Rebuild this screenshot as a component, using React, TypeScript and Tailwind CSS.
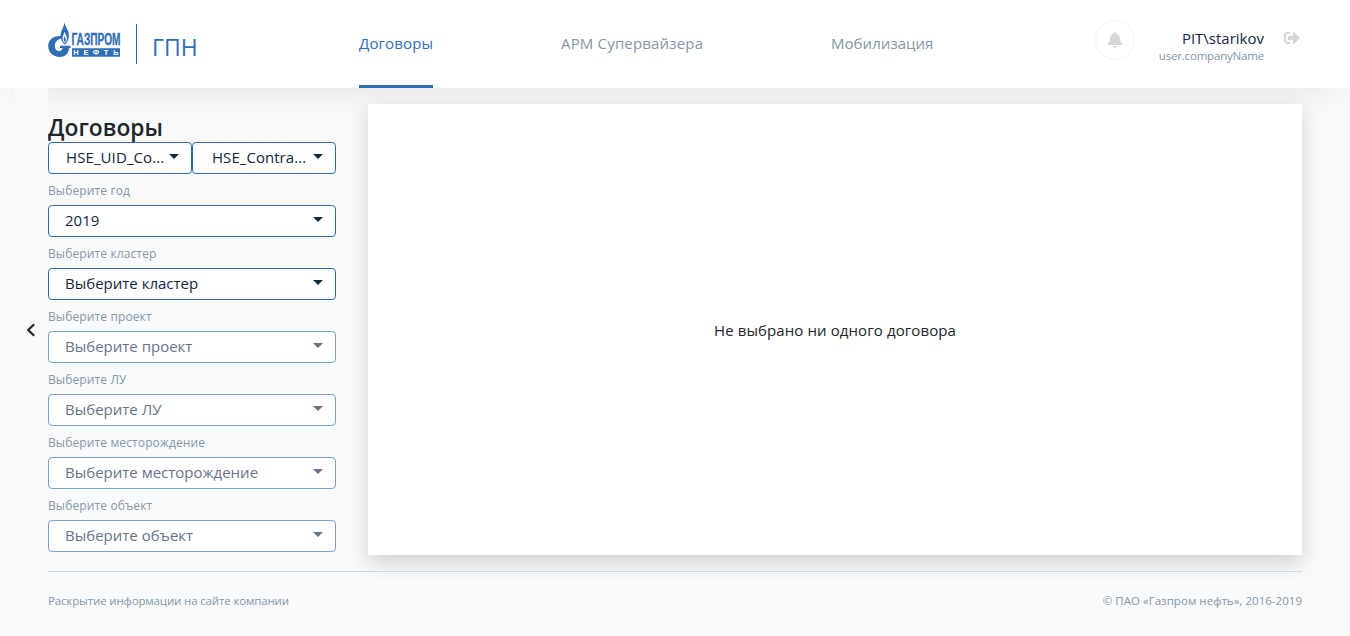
import { FaBell, FaSignOutAlt } from 'react-icons/fa';

function Logo() {
  return (
    <svg className="h-10 w-[74px] shrink-0 overflow-visible" viewBox="0 0 74 40" fill="#2e6eb5">
      <path d="M13.5 14.2C6 13.2.2 17.6.2 24c0 6.300 4.800 10.900 11.300 10.900 5.400 0 9.100-3.300 9.700-9h1.300v-2.200H12v2.200h2.600c-.4 2-1.500 3.200-3.300 3.200-2.800 0-4.500-2-4.500-5 0-3.500 2.400-6.600 6.700-7.500z" />
      <path fillRule="evenodd" d="M16.400.3c.5 4.200 4.500 7.800 4.500 13 0 4.200-1.600 7.500-4 9.300-2.600-1.800-4.300-4.700-4.300-8.800 0-5.300 3.600-8.500 3.800-13.500zm.2 9.500c-.7 2.800-2 4-2 6.600 0 2.100.8 3.700 2.100 4.700 1.400-1.100 2.200-2.700 2.200-4.800 0-2.400-1.600-3.900-2.300-6.500z" />
      <path d="M16.700 13.500c-.2 1.800-1 2.700-1 4.300 0 1.100.4 1.900 1 2.500.7-.6 1.100-1.500 1.100-2.500 0-1.500-.9-2.500-1.100-4.300z" />
      <text x="23.500" y="22.600" fontFamily="Liberation Sans Narrow, Liberation Sans, sans-serif" fontWeight="700" fontSize="16" textLength="49" lengthAdjust="spacingAndGlyphs" stroke="#2e6eb5" strokeWidth="0.300">ГАЗПРОМ</text>
      <path d="M24 26.300h48v8.400H24z" />
      <g fill="#fff" fontFamily="Liberation Sans, sans-serif" fontWeight="700" fontSize="7.500" textAnchor="middle">
        <text x="28" y="33.200">Н</text>
        <text x="38" y="33.200">Е</text>
        <text x="48" y="33.200">Ф</text>
        <text x="58" y="33.200">Т</text>
        <text x="68" y="33.200">Ь</text>
      </g>
    </svg>
  );
}

function Caret() {
  return (
    <svg className="mb-[3px] h-[5px] w-[10px] shrink-0" viewBox="0 0 10 5" fill="currentColor">
      <path d="M0 0h10L5 5z" />
    </svg>
  );
}

type FieldProps = { label: string; value: string; disabled?: boolean };

function Field({ label, value, disabled }: FieldProps) {
  return (
    <div className="flex flex-col pt-2">
      <label className="h-[23px] text-xs leading-[18px] tracking-[0.12px] whitespace-nowrap text-[#8397a9]">{label}</label>
      <button
        disabled={disabled}
        className={`flex h-8 items-center justify-between rounded-[4px] border bg-white pr-3 pl-4 text-[15px] whitespace-nowrap ${disabled ? 'border-[#77a0cd] text-[#65738a]' : 'border-[#2e6eb5] text-[#132642]'}`}
      >
        <span className="pb-0.5">{value}</span>
        <Caret />
      </button>
    </div>
  );
}

const fields: FieldProps[] = [
  { label: 'Выберите год', value: '2019' },
  { label: 'Выберите кластер', value: 'Выберите кластер' },
  { label: 'Выберите проект', value: 'Выберите проект', disabled: true },
  { label: 'Выберите ЛУ', value: 'Выберите ЛУ', disabled: true },
  { label: 'Выберите месторождение', value: 'Выберите месторождение', disabled: true },
  { label: 'Выберите объект', value: 'Выберите объект', disabled: true },
];

export default function App() {
  return (
    <div className="flex h-[636px] w-[1350px] flex-col overflow-hidden bg-[#f9fafc] font-['Open_Sans',sans-serif] text-[#212529]">
      <header className="flex h-[88px] shrink-0 bg-white pr-[50px] pl-12 shadow-[0_16px_40px_-16px_rgba(0,0,0,0.1)]">
        <div className="flex w-[311px] items-start pt-[22px]">
          <Logo />
          <div className="mt-0.5 ml-[14px] h-10 w-px bg-[#2e6eb5]" />
          <span className="ml-[15px] pt-[9px] text-[23px] leading-8 text-[#2e6eb5]">ГПН</span>
        </div>
        <nav className="flex gap-32 text-[15px] whitespace-nowrap text-[#8397a9]">
          <a className="w-[74px] border-b-[3px] border-[#2e6eb5] pt-[31px] leading-6 tracking-[0.12px] text-[#2e6eb5]">Договоры</a>
          <a className="w-[142px] pt-[31px] leading-6 tracking-[0.17px]">АРМ Супервайзера</a>
          <a className="w-[102px] pt-[31px] leading-6 tracking-[0.05px]">Мобилизация</a>
        </nav>
        <div className="ml-auto flex items-start">
          <div className="mt-5 flex size-10 items-center justify-center rounded-full border border-[#f2f3f5] text-[#d3d7dc]">
            <FaBell className="size-4" />
          </div>
          <div className="ml-6 flex w-[105px] flex-col items-end pt-[27px] whitespace-nowrap">
            <span className="text-[15px] leading-[22px] text-[#132642]">PIT\starikov</span>
            <span className="text-[11.500px] leading-[14px] tracking-[-0.19px] text-[#8397a9]">user.companyName</span>
          </div>
          <FaSignOutAlt className="mt-[30px] ml-5 size-4 text-[#d3d7dc]" />
        </div>
      </header>

      <main className="flex h-[483px] shrink-0 pr-12 pl-[14px]">
        <button className="relative flex w-[34px] items-center justify-center rounded-t-[4px] bg-[#f9f9fb]">
          <svg className="h-[14px] w-[10px]" viewBox="0 0 10 14" fill="none" stroke="#212529" strokeWidth="2.200">
            <path d="M8.200 1.200 2.200 7l6 5.800" />
          </svg>
        </button>
        <aside className="w-[288px] pt-[26px]">
          <h1 className="h-7 text-[22.800px] leading-7 font-semibold">Договоры</h1>
          <div className="flex text-[15px] text-[#132642]">
            <button className="flex h-8 w-36 items-center justify-between rounded-[4px] border border-[#2e6eb5] bg-white pr-3 pl-[17px]">
              <span className="pb-0.5 tracking-[0.1px]">HSE_UID_Co...</span>
              <Caret />
            </button>
            <button className="flex h-8 w-36 items-center justify-between rounded-[4px] border border-[#2e6eb5] bg-white pr-3 pl-[19px]">
              <span className="pb-0.5 tracking-[0.05px]">HSE_Contra...</span>
              <Caret />
            </button>
          </div>
          {fields.map((f) => (
            <Field key={f.label} {...f} />
          ))}
        </aside>
        <section className="mt-4 ml-8 flex h-[451px] w-[934px] items-center justify-center bg-white text-[15px] shadow-[0_8px_20px_rgba(0,0,0,0.16)]">
          <span className="pt-0.5 tracking-[0.1px]">Не выбрано ни одного договора</span>
        </section>
      </main>

      <footer className="mx-12 flex flex-1 justify-between border-t border-[#d3d7dc] pt-5 text-[11.500px] leading-[18px] text-[#8397a9]">
        <span className="tracking-[-0.15px]">Раскрытие информации на сайте компании</span>
        <span className="tracking-[0.03px]">© ПАО «Газпром нефть», 2016-2019</span>
      </footer>
    </div>
  );
}
